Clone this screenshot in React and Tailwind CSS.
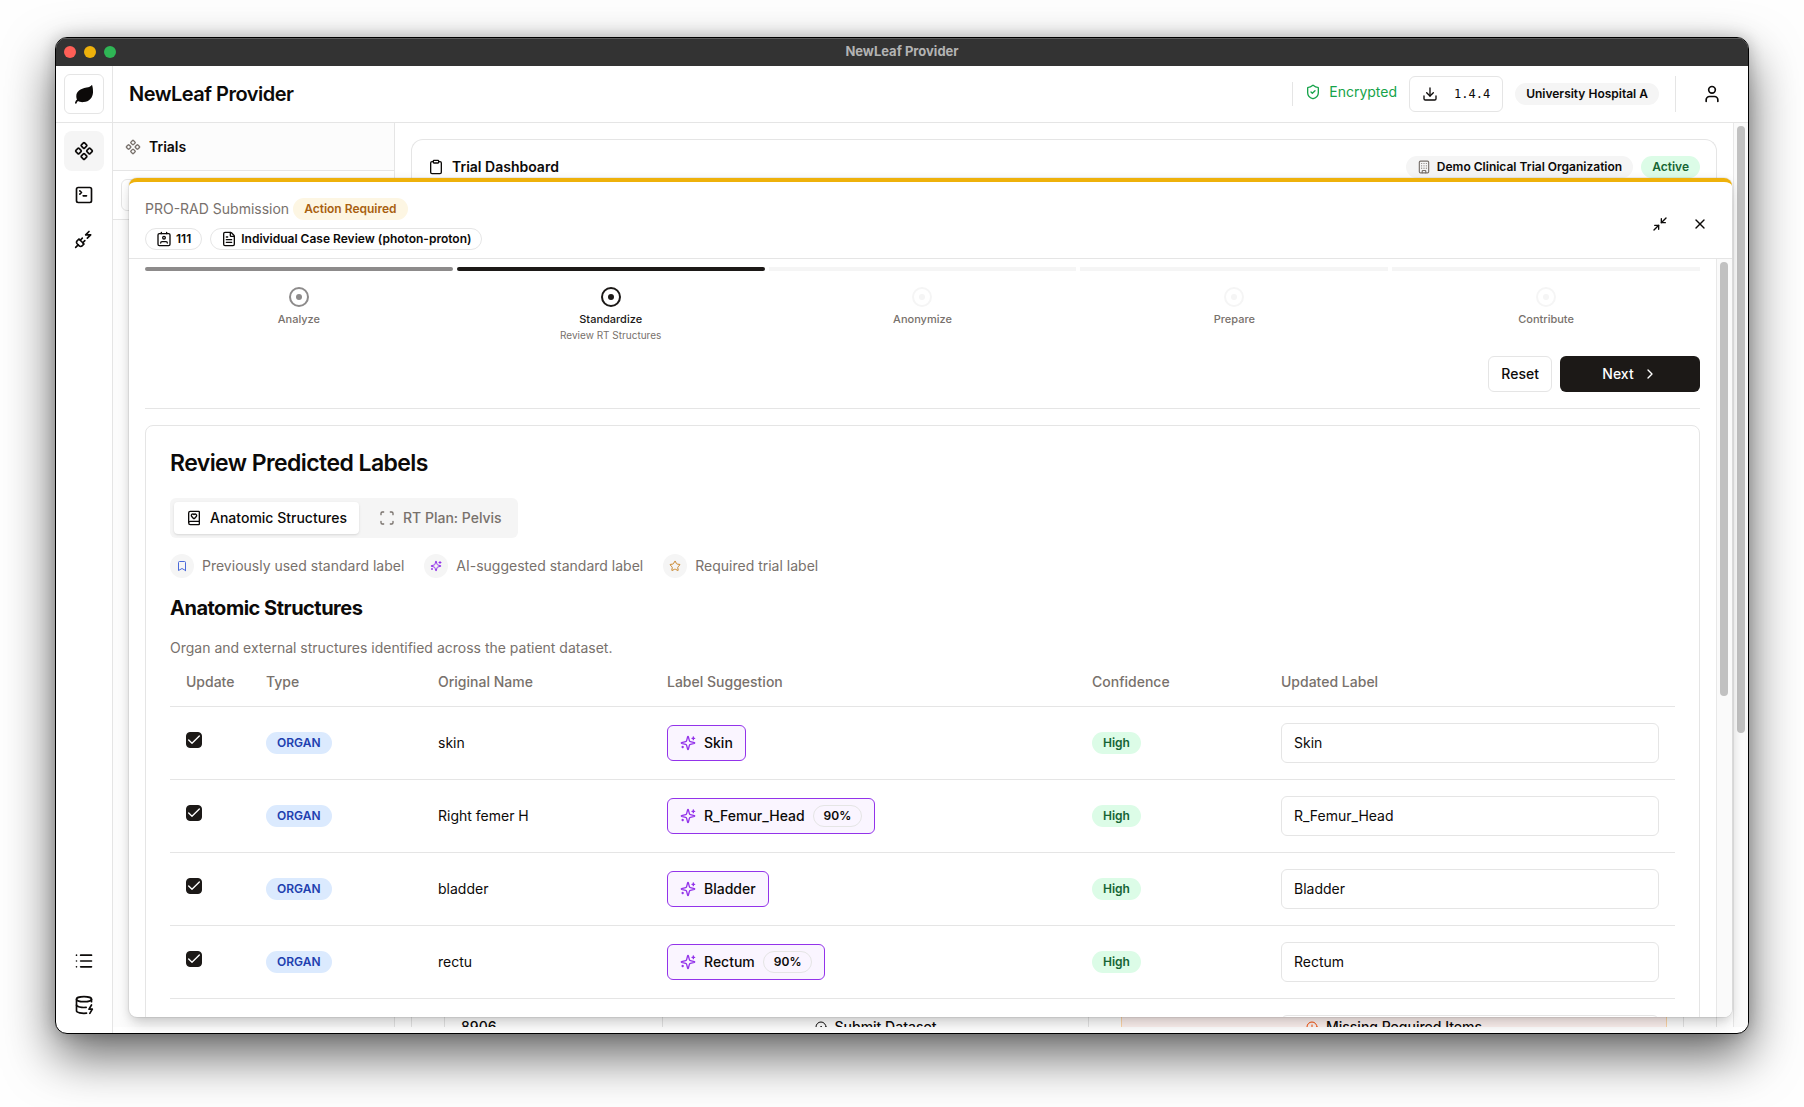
import React, { useState } from "react";
import {
  BookHeart,
  Bookmark,
  Building,
  Check,
  ChevronRight,
  CircleAlert,
  CircleDot,
  Clipboard,
  Component,
  DatabaseZap,
  Download,
  FileText,
  List,
  Minimize2,
  PlugZap,
  Scan,
  ShieldCheck,
  SquareTerminal,
  Star,
  User,
  X,
} from "lucide-react";

const steps = [
  { name: "Analyze", state: "done" },
  { name: "Standardize", state: "current", detail: "Review RT Structures" },
  { name: "Anonymize", state: "todo" },
  { name: "Prepare", state: "todo" },
  { name: "Contribute", state: "todo" },
];

const barStyles = {
  done: "rounded-sm bg-[#8d8b8b]",
  current: "rounded-sm bg-[#1c1917]",
  todo: "bg-[#f5f5f5]",
};

const dotStyles = {
  done: "text-[#8d8b8b]",
  current: "text-[#1c1917]",
  todo: "text-[#f5f5f5]",
};

const initialRows = [
  { id: 1, type: "ORGAN", original: "skin", suggestion: "Skin", confidence: "High", updated: "Skin", checked: true },
  { id: 2, type: "ORGAN", original: "Right femer H", suggestion: "R_Femur_Head", score: "90%", confidence: "High", updated: "R_Femur_Head", checked: true },
  { id: 3, type: "ORGAN", original: "bladder", suggestion: "Bladder", confidence: "High", updated: "Bladder", checked: true },
  { id: 4, type: "ORGAN", original: "rectu", suggestion: "Rectum", score: "90%", confidence: "High", updated: "Rectum", checked: true },
  { id: 5, type: "", original: "", suggestion: "", confidence: "", updated: "", checked: false },
];

function Badge({ className, children }) {
  return (
    <span
      className={`inline-flex h-[22px] items-center rounded-full border px-2.5 text-xs font-semibold whitespace-nowrap ${className}`}
    >
      {children}
    </span>
  );
}

function LeafLogo() {
  return (
    <svg viewBox="0 0 24 24" className="h-6 w-6" fill="currentColor" aria-hidden="true">
      <path d="M19.600 3.200c-1 1.200-2.500 1.900-5 2.400C8.300 6.700 4.300 9.600 4.300 14.400c0 1.200.3 2.300.7 3.200-.9.800-1.600 1.800-2 3.100-.2.500.1.900.5 1 .4.100.8-.1 1-.5.3-.9.900-1.600 1.500-2.200 1.400.9 3.300 1.300 5.600 1.100 5.600-.5 9.200-4.600 9.400-9.700.1-2.500-.2-5-.8-7-.1-.4-.4-.4-.6-.2z" />
    </svg>
  );
}

function StrokeIcon({ className, children }) {
  return (
    <svg
      viewBox="0 0 24 24"
      className={className}
      fill="none"
      stroke="currentColor"
      strokeWidth="2"
      strokeLinecap="round"
      strokeLinejoin="round"
      aria-hidden="true"
    >
      {children}
    </svg>
  );
}

// id card with two hanger pins
function ContactIcon({ className }) {
  return (
    <StrokeIcon className={className}>
      <path d="M17 18a2 2 0 0 0-2-2H9a2 2 0 0 0-2 2" />
      <rect x="3" y="4" width="18" height="18" rx="2" />
      <circle cx="12" cy="10" r="2" />
      <path d="M8 2v2M16 2v2" />
    </StrokeIcon>
  );
}

function SparklesIcon({ className }) {
  return (
    <StrokeIcon className={className}>
      <path d="M9.937 15.500A2 2 0 0 0 8.500 14.063l-6.135-1.582a.5.5 0 0 1 0-.962L8.500 9.936A2 2 0 0 0 9.937 8.500l1.582-6.135a.5.5 0 0 1 .963 0L14.063 8.500A2 2 0 0 0 15.500 9.937l6.135 1.581a.5.5 0 0 1 0 .964L15.500 14.063a2 2 0 0 0-1.437 1.437l-1.582 6.135a.5.5 0 0 1-.963 0z" />
      <path d="M20 3v4M22 5h-4M4 17v2M5 18H3" />
    </StrokeIcon>
  );
}

function TitleBar() {
  return (
    <div className="grid h-7 shrink-0 grid-cols-[1fr_auto_1fr] items-center bg-[#333333] px-2 shadow-[inset_0_1px_0_#5c5c5c]">
      <div className="flex gap-2">
        <span className="h-3 w-3 rounded-full bg-[#ff5f57]" />
        <span className="h-3 w-3 rounded-full bg-[#eeb10b]" />
        <span className="h-3 w-3 rounded-full bg-[#2fb655]" />
      </div>
      <span className="text-[13px] font-bold text-[#b3b3b3]">NewLeaf Provider</span>
    </div>
  );
}

function SideButton({ label, active, icon: Icon }) {
  return (
    <button
      aria-label={label}
      className={`flex h-10 w-10 items-center justify-center rounded-lg ${active ? "bg-[#f5f5f5]" : ""}`}
    >
      <Icon className="h-5 w-5" />
    </button>
  );
}

function Sidebar() {
  return (
    <nav className="flex w-[57px] shrink-0 flex-col border-r border-[#e5e5e5]">
      <div className="flex h-[57px] items-center border-b border-[#e5e5e5] px-2">
        <button aria-label="Home" className="flex h-10 w-10 items-center justify-center rounded-md border border-[#e5e5e5]">
          <LeafLogo />
        </button>
      </div>
      <div className="flex flex-1 flex-col gap-1 p-2">
        <SideButton label="Trials" icon={Component} active />
        <SideButton label="Console" icon={SquareTerminal} />
        <SideButton label="Connections" icon={PlugZap} />
        <div className="flex-1" />
        <SideButton label="Activity" icon={List} />
        <SideButton label="Data" icon={DatabaseZap} />
      </div>
    </nav>
  );
}

function Header() {
  return (
    <header className="flex h-[57px] shrink-0 items-center border-b border-[#e5e5e5] px-4">
      <h1 className="flex-1 text-xl font-semibold tracking-tight">NewLeaf Provider</h1>
      <div className="flex items-center gap-3">
        <span className="h-6 w-px bg-[#e5e5e5]" />
        <span className="flex items-center gap-2 pb-1 text-sm text-[#16a34a]">
          <ShieldCheck className="h-4 w-4" />
          Encrypted
        </span>
        <button className="flex h-9 items-center gap-4 rounded-md border border-[#e5e5e5] px-3 font-['DejaVu_Sans_Mono',monospace] text-xs">
          <Download className="h-4 w-4" />
          1.4.4
        </button>
        <Badge className="border-transparent bg-[#f5f5f5]">University Hospital A</Badge>
      </div>
      <span className="mx-4 h-9 w-px bg-[#e5e5e5]" />
      <button aria-label="Account" className="flex h-10 w-10 items-center justify-center">
        <User className="h-5 w-5" />
      </button>
    </header>
  );
}

function TrialsPanel() {
  return (
    <aside className="flex w-[282px] shrink-0 flex-col border-r border-[#e5e5e5] bg-[#fcfcfc]">
      <div className="flex h-12 items-center gap-2 border-b border-[#e5e5e5] px-3">
        <Component className="h-4 w-4 text-[#78716c]" />
        <h2 className="text-sm font-semibold">Trials</h2>
      </div>
      <div className="border-b border-[#e5e5e5] bg-white p-2">
        <input
          aria-label="Search trials"
          className="block h-8 w-full rounded-md border border-[#e5e5e5] bg-white px-2 text-sm"
        />
      </div>
    </aside>
  );
}

function Dashboard() {
  return (
    <section className="flex min-w-0 flex-1 flex-col px-4 pt-4">
      <div className="flex flex-1 flex-col rounded-t-xl border-x border-t border-[#e5e5e5]">
        <div className="flex items-center gap-2 p-4">
          <Clipboard className="h-4 w-4" />
          <h2 className="flex-1 text-sm leading-[22px] font-semibold">Trial Dashboard</h2>
          <Badge className="gap-1.5 border-transparent bg-[#f5f5f5]">
            <Building className="h-3.5 w-3.5 text-[#78716c]" />
            Demo Clinical Trial Organization
          </Badge>
          <Badge className="border-transparent bg-[#dcfce7] text-[#166534]">Active</Badge>
        </div>
        <div className="flex-1" />
        <div className="mx-8 flex h-8 overflow-hidden border-x border-[#e5e5e5] text-sm font-medium">
          <div className="w-[218px] border-r border-[#e5e5e5] px-4 pt-[22px]">8906</div>
          <div className="flex w-[426px] justify-center gap-2 border-r border-[#e5e5e5] pt-[22px]">
            <CircleDot className="mt-1 h-3 w-3" />
            Submit Dataset
          </div>
          <div className="flex-1 pr-4 pl-8">
            <div className="flex h-full justify-center gap-2 border-x border-orange-200 bg-[#fef2f0] pt-[22px]">
              <CircleAlert className="mt-1 h-3 w-3 text-orange-600" />
              Missing Required Items
            </div>
          </div>
        </div>
      </div>
    </section>
  );
}

function StepDot({ className }) {
  return (
    <svg viewBox="0 0 20 20" className={`h-5 w-5 ${className}`} aria-hidden="true">
      <circle cx="10" cy="10" r="9" fill="none" stroke="currentColor" strokeWidth="2" />
      <circle cx="10" cy="10" r="3" fill="currentColor" />
    </svg>
  );
}

function Stepper() {
  return (
    <ol className="grid h-[74px] grid-cols-5 gap-1">
      {steps.map((step) => (
        <li key={step.name} className="flex flex-col items-center">
          <div className={`mb-4 h-1 w-full ${barStyles[step.state]}`} />
          <StepDot className={dotStyles[step.state]} />
          <span
            className={`mt-1 text-[11px] leading-4 font-medium ${
              step.state === "current" ? "text-[#1c1917]" : "text-[#78716c]"
            }`}
          >
            {step.name}
          </span>
          {step.detail && <span className="text-[10px] leading-4 text-[#78716c]">{step.detail}</span>}
        </li>
      ))}
    </ol>
  );
}

function LegendItem({ icon: Icon, color, children }) {
  return (
    <span className="flex items-center gap-2">
      <span className="flex h-6 w-6 items-center justify-center rounded-full bg-[#f5f5f5]">
        <Icon className={`h-3 w-3 ${color}`} />
      </span>
      {children}
    </span>
  );
}

function StructureRow({ row, onToggle, onRename }) {
  return (
    <tr className="h-[73px] border-b border-[#e5e5e5]">
      <td className="px-4">
        {row.type && (
          <label className="relative flex h-[22px] w-4">
            <input
              type="checkbox"
              aria-label={`Update ${row.original}`}
              checked={row.checked}
              onChange={onToggle}
              className="h-4 w-4 appearance-none rounded-sm border border-[#1c1917] checked:bg-[#1c1917]"
            />
            {row.checked && <Check className="pointer-events-none absolute top-0 left-0 h-4 w-4 text-white" />}
          </label>
        )}
      </td>
      <td className="px-4">
        {row.type && <Badge className="border-transparent bg-[#dbeafe] text-[#1e40af]">{row.type}</Badge>}
      </td>
      <td className="px-4">{row.original}</td>
      <td className="px-4">
        {row.suggestion && (
          <button className="flex h-9 items-center gap-2 rounded-md border border-[#9333ea] bg-[#faf5ff] px-3 font-medium">
            <SparklesIcon className="h-4 w-4 text-[#9333ea]" />
            {row.suggestion}
            {row.score && <Badge className="border-[#e5e5e5]">{row.score}</Badge>}
          </button>
        )}
      </td>
      <td className="px-4">
        {row.confidence && (
          <Badge className="border-transparent bg-[#dcfce7] text-[#166534]">{row.confidence}</Badge>
        )}
      </td>
      <td className="px-4">
        <input
          type="text"
          aria-label="Updated label"
          value={row.updated}
          onChange={(e) => onRename(e.target.value)}
          className="block h-10 w-full rounded-md border border-[#e5e5e5] bg-white px-3 text-sm"
        />
      </td>
    </tr>
  );
}

function ReviewLabels() {
  const [rows, setRows] = useState(initialRows);

  const updateRow = (id, changes) => {
    setRows(rows.map((row) => (row.id === id ? { ...row, ...changes } : row)));
  };

  return (
    <section className="rounded-lg border border-[#e5e5e5] p-6">
      <h2 className="text-[23px] leading-[26px] font-semibold tracking-tight">Review Predicted Labels</h2>

      <div role="tablist" className="mt-[22px] inline-flex h-10 rounded-md bg-[#f5f5f5] p-1 text-sm font-medium">
        <button role="tab" aria-selected="true" className="flex items-center gap-2 rounded-sm bg-white px-3 shadow-sm">
          <BookHeart className="h-4 w-4" />
          Anatomic Structures
        </button>
        <button role="tab" aria-selected="false" className="flex items-center gap-2 px-3 pl-5 text-[#78716c]">
          <Scan className="h-4 w-4" />
          RT Plan: Pelvis
        </button>
      </div>

      <div className="mt-4 flex gap-5 text-sm text-[#78716c]">
        <LegendItem icon={Bookmark} color="text-[#4a69d9]">
          Previously used standard label
        </LegendItem>
        <LegendItem icon={SparklesIcon} color="text-[#9333ea]">
          AI-suggested standard label
        </LegendItem>
        <LegendItem icon={Star} color="text-[#ca8528]">
          Required trial label
        </LegendItem>
      </div>

      <h3 className="mt-4 text-xl leading-7 font-bold tracking-tight">Anatomic Structures</h3>
      <p className="mt-4 text-sm text-[#78716c]">Organ and external structures identified across the patient dataset.</p>

      <table className="w-full table-fixed text-sm">
        <thead>
          <tr className="h-12 border-b border-[#e5e5e5] text-left text-[#78716c]">
            <th className="w-20 px-4 font-medium">Update</th>
            <th className="w-[172px] px-4 font-medium">Type</th>
            <th className="w-[229px] px-4 font-medium">Original Name</th>
            <th className="w-[425px] px-4 font-medium">Label Suggestion</th>
            <th className="w-[189px] px-4 font-medium">Confidence</th>
            <th className="px-4 font-medium">Updated Label</th>
          </tr>
        </thead>
        <tbody>
          {rows.map((row) => (
            <StructureRow
              key={row.id}
              row={row}
              onToggle={() => updateRow(row.id, { checked: !row.checked })}
              onRename={(updated) => updateRow(row.id, { updated })}
            />
          ))}
        </tbody>
      </table>
    </section>
  );
}

function SubmissionDialog() {
  return (
    <div
      role="dialog"
      aria-label="PRO-RAD Submission"
      className="absolute top-[55px] right-4 bottom-4 left-4 flex flex-col overflow-hidden rounded-lg border-t-4 border-[#eeb10b] bg-white shadow-[0_0_0_1px_rgba(0,0,0,0.06),0_10px_15px_-3px_rgba(0,0,0,0.15),0_2px_10px_rgba(0,0,0,0.1)]"
    >
      <div className="flex items-center justify-between border-b border-[#e5e5e5] px-4 pt-4 pb-2">
        <div className="flex flex-col gap-2">
          <div className="flex items-center gap-1">
            <h2 className="text-sm leading-[22px] text-[#78716c]">PRO-RAD Submission</h2>
            <Badge className="border-transparent bg-[#fdf6e3] text-[#a85f10]">Action Required</Badge>
          </div>
          <div className="flex items-center gap-2">
            <Badge className="gap-1 border-[#e5e5e5]">
              <ContactIcon className="h-4 w-4" />
              111
            </Badge>
            <Badge className="gap-1 border-[#e5e5e5]">
              <FileText className="h-4 w-4" />
              Individual Case Review (photon-proton)
            </Badge>
          </div>
        </div>
        <div className="flex gap-2">
          <button aria-label="Minimize" className="flex h-8 w-8 items-center justify-center">
            <Minimize2 className="h-4 w-4" />
          </button>
          <button aria-label="Close" className="flex h-8 w-8 items-center justify-center">
            <X className="h-4 w-4" />
          </button>
        </div>
      </div>
      <div className="flex min-h-0 flex-1">
        <div className="min-w-0 flex-1 overflow-hidden px-4 pt-2">
          <Stepper />
          <div className="mt-[15px] mb-4 flex justify-end gap-2 border-b border-[#e5e5e5] pb-4 text-sm font-medium">
            <button className="h-9 rounded-md border border-[#e5e5e5] px-3">Reset</button>
            <button className="flex h-9 w-[140px] items-center justify-center gap-2 rounded-md bg-[#1c1917] text-white">
              Next
              <ChevronRight className="h-4 w-4" />
            </button>
          </div>
          <ReviewLabels />
        </div>
        <div className="w-4 border-l border-[#e8e8e8] bg-[#fafafa] px-[3px] pt-[3px]">
          <div className="h-[434px] w-2 rounded-full bg-[#c1c1c1]" />
        </div>
      </div>
    </div>
  );
}

export default function App() {
  return (
    <div className="flex h-screen bg-[#fefefe] px-[55px] pt-[37px] pb-[73px] font-[Inter,sans-serif] text-[#0c0a09]">
      <div className="flex min-w-0 flex-1 flex-col overflow-hidden rounded-xl border border-black bg-white shadow-[0_22px_50px_rgba(0,0,0,0.6),0_0_16px_rgba(0,0,0,0.2)]">
        <TitleBar />
        <div className="flex min-h-0 flex-1">
          <Sidebar />
          <div className="flex min-w-0 flex-1 flex-col">
            <Header />
            <main className="relative flex min-h-0 flex-1 pb-1.5">
              <TrialsPanel />
              <Dashboard />
              <div className="w-[15px] border-l border-[#e8e8e8] bg-[#fafafa] px-[3px] pt-[3px]">
                <div className="h-[607px] w-2 rounded-full bg-[#c1c1c1]" />
              </div>
              <SubmissionDialog />
            </main>
          </div>
        </div>
      </div>
    </div>
  );
}
